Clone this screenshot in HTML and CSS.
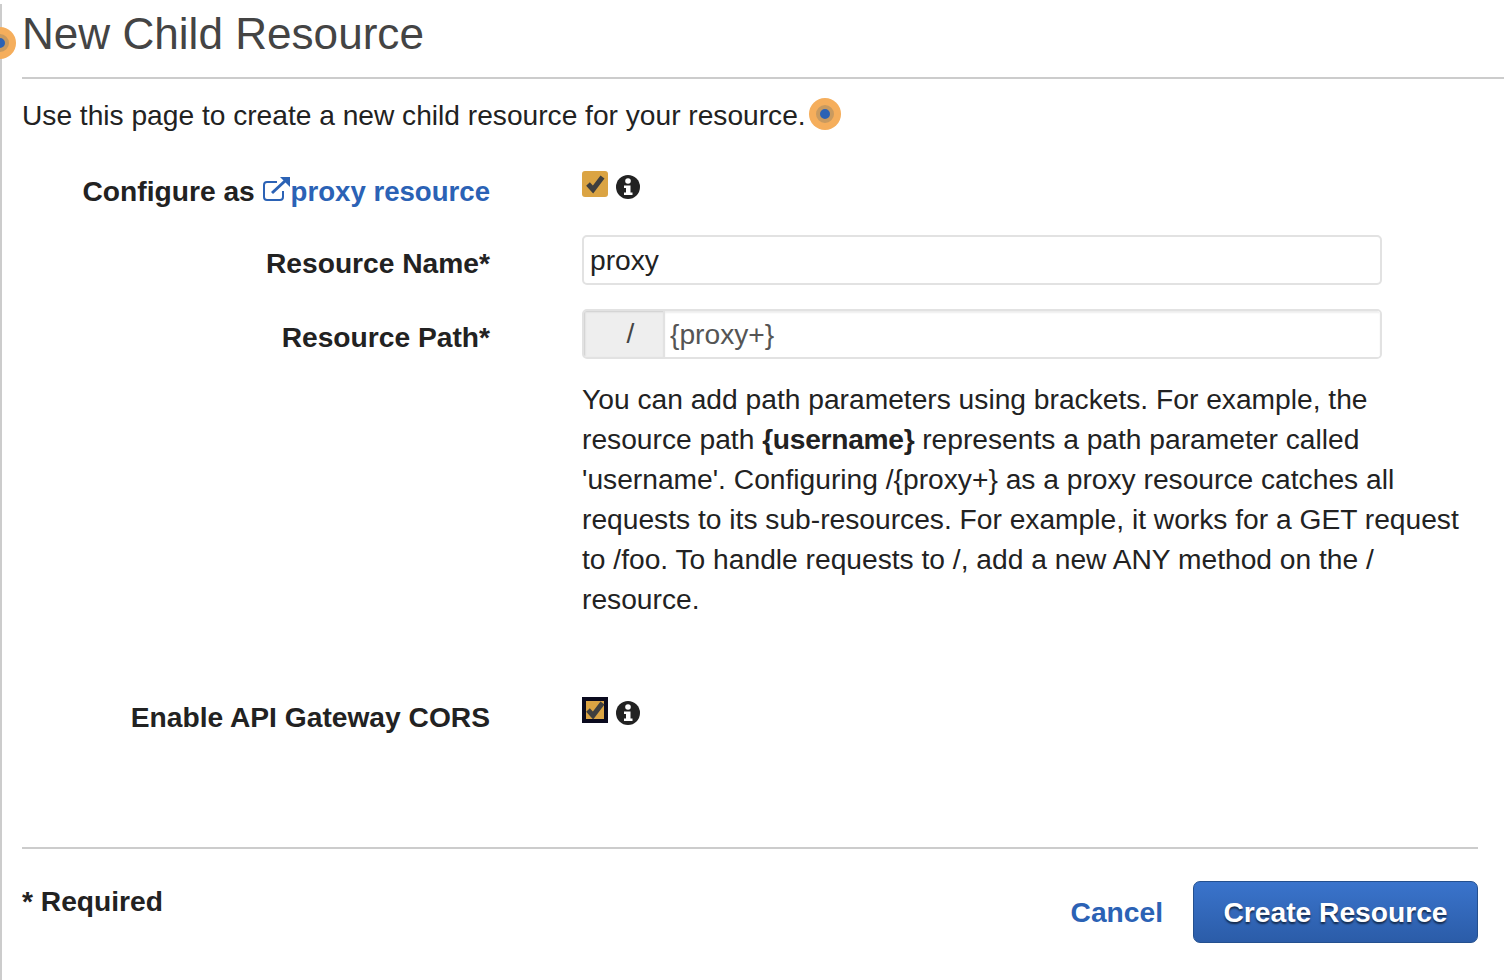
FILE: index.html
```html
<!DOCTYPE html>
<html lang="en">

<head>
  <meta charset="UTF-8" />
  <title>New Child Resource</title>
  <link rel="stylesheet" href="styles.css">
</head>

<body>
  <span class="hotspot hotspot-edge"><span class="hotspot-core"></span></span>

  <div class="page">
    <h1 class="title">New Child Resource</h1>

    <p class="intro">
      <span>Use this page to create a new child resource for your resource.</span>
      <span class="hotspot hotspot-inline"><span class="hotspot-core"></span></span>
    </p>

    <div class="form">
      <div class="row row-proxy">
        <div class="row-label">
          Configure as
          <a class="link" href="#">
            <svg class="ext-icon" viewBox="0 0 28 26" width="28" height="26">
              <path d="M20 15v6a3 3 0 0 1-3 3H4a3 3 0 0 1-3-3V9a3 3 0 0 1 3-3h10" fill="none" stroke="#2b62b5" stroke-width="2" />
              <path d="M9 17L22 5" fill="none" stroke="#2b62b5" stroke-width="3" />
              <path d="M17 1h10v10z" fill="#2b62b5" />
            </svg>proxy resource
          </a>
        </div>
        <div class="check-wrap">
          <span class="check">
            <svg viewBox="0 0 26 26" width="26" height="26"><path d="M6 13l5 5.500L20.500 6" fill="none" stroke="#3f3f3f" stroke-width="5" /></svg>
          </span>
          <svg class="info" viewBox="0 0 24 24" width="24" height="24">
            <circle cx="12" cy="12" r="12" fill="#222" />
            <circle cx="12" cy="6" r="2.800" fill="#fff" />
            <path d="M8 10.500h6.500v7H16.500v2.500H8v-2.500h2v-4.500H8z" fill="#fff" />
          </svg>
        </div>
      </div>

      <div class="row row-name">
        <label class="row-label" for="resourceName">Resource Name*</label>
        <input class="text-input" id="resourceName" type="text" value="proxy" />
      </div>

      <div class="row row-path">
        <label class="row-label" for="resourcePath">Resource Path*</label>
        <div class="field-col">
          <div class="path-group">
            <span class="path-prefix">/</span>
            <input class="path-input" id="resourcePath" type="text" value="{proxy+}" />
          </div>
          <p class="help">You can add path parameters using brackets. For example, the resource path <strong>{username}</strong> represents a path parameter called 'username'. Configuring /{proxy+} as a proxy resource catches all requests to its sub-resources. For example, it works for a GET request to /foo. To handle requests to /, add a new ANY method on the / resource.</p>
        </div>
      </div>

      <div class="row row-cors">
        <div class="row-label">Enable API Gateway CORS</div>
        <div class="check-wrap">
          <span class="check check-focus">
            <svg viewBox="0 0 26 26" width="26" height="26"><path d="M6 13l5 5.500L20.500 6" fill="none" stroke="#3f3f3f" stroke-width="5" /></svg>
          </span>
          <svg class="info" viewBox="0 0 24 24" width="24" height="24">
            <circle cx="12" cy="12" r="12" fill="#222" />
            <circle cx="12" cy="6" r="2.800" fill="#fff" />
            <path d="M8 10.500h6.500v7H16.500v2.500H8v-2.500h2v-4.500H8z" fill="#fff" />
          </svg>
        </div>
      </div>
    </div>

    <div class="footer">
      <div class="required">* Required</div>
      <div class="actions">
        <a class="cancel" href="#">Cancel</a>
        <button class="primary" type="button">Create Resource</button>
      </div>
    </div>
  </div>
</body>

</html>
```
FILE: styles.css
```css
html,
body {
  margin: 0;
  padding: 0;
  height: 100%;
  background: #fff;
}

body {
  font-family: "Liberation Sans", Arial, sans-serif;
  color: #222;
  overflow: hidden;
  position: relative;
}

.page {
  height: 980px;
  box-sizing: border-box;
  padding-left: 22px;
  background: linear-gradient(#ccc, #ccc) 0 4px / 2px 100% no-repeat;
}

.title {
  margin: 0;
  height: 79px;
  box-sizing: border-box;
  padding-top: 6px;
  font-size: 44.100px;
  line-height: 56px;
  font-weight: 400;
  color: #444;
  border-bottom: 2px solid #ccc;
}

.intro {
  margin: 0;
  height: 74px;
  display: flex;
  align-items: center;
  font-size: 28.150px;
  line-height: 40px;
  color: #222;
}

.hotspot {
  display: inline-flex;
  align-items: center;
  justify-content: center;
  width: 32px;
  height: 32px;
  border-radius: 50%;
  background: #f5ae5c;
}

.hotspot-core {
  display: block;
  width: 10px;
  height: 10px;
  border-radius: 50%;
  background: #2b62b5;
  border: 4px solid #c99a5f;
}

.hotspot-inline {
  margin-left: 3px;
  margin-top: -4px;
}

.hotspot-edge {
  position: absolute;
  left: -16px;
  top: 27px;
}

.form {
  padding-right: 26px;
}

.row {
  display: grid;
  grid-template-columns: 468px 1fr;
  column-gap: 92px;
}

.row-label {
  text-align: right;
  font-size: 28.200px;
  font-weight: 700;
  line-height: 40px;
  color: #222;
  display: block;
}

.link {
  font-size: 27.600px;
  color: #2b62b5;
  text-decoration: none;
}

.ext-icon {
  vertical-align: -1px;
}

.row-proxy {
  height: 63px;
  padding-top: 15px;
}

.row-proxy .row-label {
  padding-top: 3px;
}

.row-name {
  height: 74px;
  padding-top: 4px;
}

.row-path {
  height: 359px;
}

.row-name .row-label,
.row-path .row-label {
  padding-top: 8px;
}

.row-cors {
  height: 153px;
  padding-top: 26px;
}

.row-cors .row-label {
  padding-top: 3px;
}

.check-wrap {
  display: flex;
  align-items: flex-start;
  gap: 8px;
  padding-top: 3px;
}

.check {
  display: block;
  width: 26px;
  height: 26px;
  border-radius: 3px;
  background: #dba443;
}

.check svg {
  display: block;
}

.check-focus {
  border-radius: 0;
  box-shadow: inset 0 0 0 4px #0a0a1e;
}

.info {
  margin-top: 4px;
}

.text-input,
.path-group {
  width: 800px;
  height: 50px;
  box-sizing: border-box;
  border: 2px solid #e2e2e2;
  border-radius: 5px;
  background: #fff;
}

.text-input {
  padding: 0 6px;
  font: 28.200px "Liberation Sans", Arial, sans-serif;
  color: #222;
  outline: none;
}

.path-group {
  display: flex;
  overflow: hidden;
}

.path-prefix {
  width: 81px;
  flex: none;
  box-sizing: border-box;
  padding-left: 14px;
  text-align: center;
  font-size: 28.200px;
  line-height: 44px;
  color: #444;
  background: #eee;
  border-right: 2px solid #e2e2e2;
  box-shadow: inset 1px 1px 2px #ccc;
}

.path-input {
  flex: 1;
  min-width: 0;
  border: 0;
  padding: 0 5px;
  font: 28.200px "Liberation Sans", Arial, sans-serif;
  color: #555;
  outline: none;
  box-shadow: inset 0 2px 2px #eee;
}

.help {
  margin: 20px 0 0;
  font-size: 28.200px;
  line-height: 40px;
  color: #222;
}

.help strong {
  letter-spacing: -0.3px;
}

.footer {
  margin-right: 26px;
  border-top: 2px solid #ccc;
  display: flex;
  justify-content: space-between;
  align-items: flex-start;
  padding-top: 32px;
}

.required {
  font-size: 28.200px;
  font-weight: 700;
  line-height: 40px;
}

.actions {
  display: flex;
  align-items: center;
  gap: 30px;
}

.cancel {
  margin-top: 1px;
  font-size: 28.200px;
  font-weight: 700;
  color: #2b62b5;
  text-decoration: none;
}

.primary {
  width: 285px;
  height: 62px;
  border: 1px solid #24508f;
  border-radius: 7px;
  background: linear-gradient(#3a74cc, #2b5ca8);
  color: #fff;
  font: 700 28.200px "Liberation Sans", Arial, sans-serif;
  text-shadow: 0 2px 2px rgba(0, 0, 0, 0.6);
}
```
